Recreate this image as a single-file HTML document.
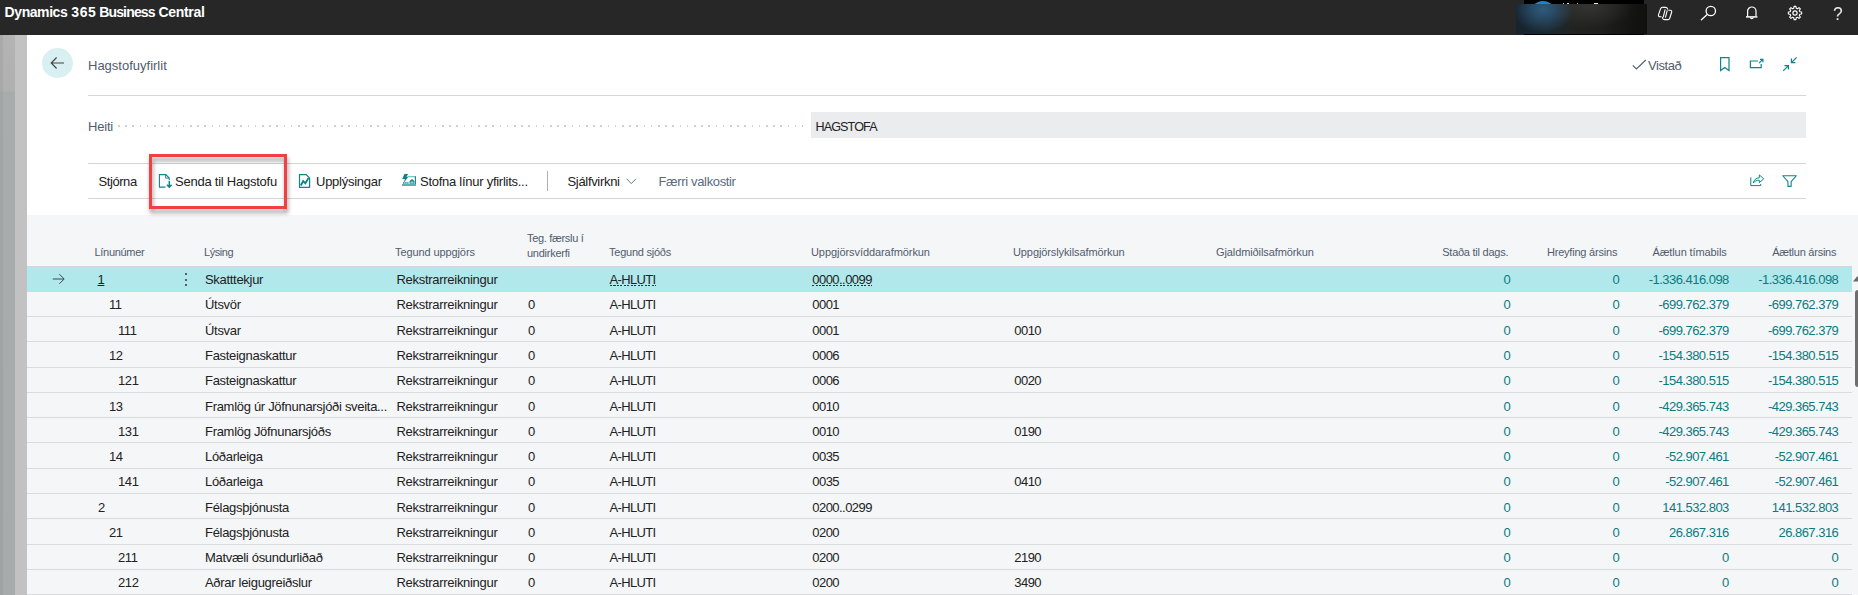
<!DOCTYPE html>
<html lang="is">
<head>
<meta charset="utf-8">
<title>Hagstofuyfirlit - Dynamics 365 Business Central</title>
<style>
*{box-sizing:border-box;margin:0;padding:0}
html,body{width:1858px;height:595px;overflow:hidden;background:#fff}
body{position:relative;font-family:"Liberation Sans",Arial,sans-serif;font-size:13px;color:#212121}
.abs{position:absolute;white-space:nowrap}
svg{overflow:visible}
#topbar{position:absolute;left:0;top:0;width:1858px;height:35px;background:#272727}
#brand{position:absolute;left:4px;top:4px;width:210px;height:17px;font-size:14px;font-weight:700;color:#fff;line-height:17px;white-space:nowrap}
#brand span{position:absolute;top:0}
#redact1{position:absolute;left:1524px;top:0;width:120px;height:35px;background:#000;overflow:hidden}
#avatar{position:absolute;left:5.5px;top:1px;width:26px;height:26px;border-radius:50%;background:#1b84cf}
.bit{position:absolute;top:3px;height:1.2px;background:#e8e8e8}
#redact2{position:absolute;left:1516px;top:4px;width:131px;height:30px;background:radial-gradient(ellipse 30px 24px at 27px 5px,#2e5a7d 0%,rgba(46,91,126,.7) 35%,rgba(30,50,66,0) 100%),radial-gradient(ellipse 46px 22px at 73px 2px,rgba(54,54,51,.9) 0%,rgba(40,40,38,0) 100%),linear-gradient(90deg,#17232d 0%,#1b2830 25%,#222321 45%,#1f1f1d 65%,#141413 88%,#101010 100%)}
.strip{position:absolute;top:35px;height:560px}
#page{position:absolute;left:27px;top:35px;width:1831px;height:180px;background:#fff}
#grid{position:absolute;left:27px;top:215px;width:1831px;height:380px;background:#f5f6f8}
.hline{position:absolute;left:88px;width:1718px;height:1px;background:#d3d7dd}
#back{position:absolute;left:42px;top:48px;width:31px;height:30px;border-radius:50%;background:#d9f0f2}
.cap{color:#505c6d}
.tb{position:absolute;top:173.5px;font-size:13px;line-height:16px;white-space:nowrap;color:#212121}
.hd{position:absolute;font-size:11px;line-height:15px;color:#505c6d;white-space:nowrap;letter-spacing:-0.1px}
.row{position:absolute;left:27px;width:1825px;border-bottom:1px solid #d9dbdf}
.row.sel{background:#b1e8eb;border-top:1px solid #d3d6da;border-bottom-color:#d3d6da}
.c{position:absolute;font-size:13px;line-height:16px;white-space:nowrap;color:#212121}
.c.r{text-align:right}
.c.t{color:#0a7b80}
.c.u{text-decoration:underline;text-underline-offset:0.5px;text-decoration-thickness:1px}
.c.du{background:repeating-linear-gradient(90deg,#333 0,#333 2px,transparent 2px,transparent 3.5px) 0 13px/100% 1px no-repeat}
.rowarrow{position:absolute;left:25px;top:6px}
.dots3{position:absolute;left:157.5px;top:6px;width:3px}
.dots3 i{display:block;width:2px;height:2px;background:#333;margin-bottom:3.7px;border-radius:1px}
</style>
</head>
<body>
<div id="topbar">
  <div id="brand"><span style="left:0.6px;letter-spacing:-0.43px">Dynamics</span> <span style="left:67.3px;letter-spacing:0.56px">365</span> <span style="left:95.2px;letter-spacing:-0.84px">Business</span> <span style="left:154.6px;letter-spacing:-0.34px">Central</span></div>
  <div id="redact1"><div id="avatar"></div><div class="bit" style="left:38.5px;width:1.6px;background:#e9c27a"></div><div class="bit" style="left:42.5px;width:2px;background:#cfe0ea"></div><div class="bit" style="left:52.5px;width:1.6px;background:#d9a0a0"></div><div class="bit" style="left:70px;width:4px"></div></div>
  <div id="redact2"></div>
  <!-- copilot -->
  <svg class="abs" style="left:1657px;top:6px" width="17" height="15" viewBox="0 0 17 15" fill="none" stroke="#fff" stroke-width="1.15" stroke-linejoin="round"><g transform="translate(0.2 0.3) scale(0.95)">
    <path d="M5.4 1.1h3.6c.9 0 1.5.5 1.8 1.3l.3 1"/>
    <path d="M5.4 1.1c-.9 0-1.5.6-1.8 1.4L1.4 8.8c-.4 1.2.3 2.2 1.5 2.2h1.7"/>
    <path d="M11.4 14H7.6c-.9 0-1.5-.5-1.8-1.3l-.4-1.4"/>
    <path d="M11.4 14c.9 0 1.5-.6 1.8-1.4l2-6.3c.4-1.2-.3-2.2-1.5-2.2h-2"/>
    <path d="M8.4 3.2L6.3 11.6"/><path d="M10.6 4.2L8.6 12"/></g>
  </svg>
  <!-- search -->
  <svg class="abs" style="left:1700px;top:4px" width="18" height="17" viewBox="0 0 18 17" fill="none" stroke="#fff" stroke-width="1.3"><g transform="translate(0.2 0.5)">
    <circle cx="10.6" cy="6.5" r="4.7"/><path d="M7 10L1.2 15.2" stroke-linecap="round"/>
  </g></svg>
  <!-- bell -->
  <svg class="abs" style="left:1744px;top:5px" width="16" height="16" viewBox="0 0 16 16" fill="none" stroke="#fff" stroke-width="1.2">
    <path d="M3.6 11.6V6.2a4.2 4.2 0 0 1 8.4 0v5.4"/><path d="M2 11.9h11.4" stroke-width="1.5"/><path d="M6.2 12.4a1.7 1.7 0 0 0 3.2 0" />
  </svg>
  <!-- gear -->
  <svg class="abs" style="left:1787px;top:5px" width="16" height="16" viewBox="0 0 16 16" fill="none" stroke="#fff" stroke-linejoin="round">
    <path stroke-width="1.1" d="M6.79 3.15 L7.06 1.37 L8.94 1.37 L9.21 3.15 L10.58 3.72 L12.02 2.64 L13.36 3.98 L12.28 5.42 L12.85 6.79 L14.63 7.06 L14.63 8.94 L12.85 9.21 L12.28 10.58 L13.36 12.02 L12.02 13.36 L10.58 12.28 L9.21 12.85 L8.94 14.63 L7.06 14.63 L6.79 12.85 L5.42 12.28 L3.98 13.36 L2.64 12.02 L3.72 10.58 L3.15 9.21 L1.37 8.94 L1.37 7.06 L3.15 6.79 L3.72 5.42 L2.64 3.98 L3.98 2.64 L5.42 3.72Z"/>
    <circle cx="8" cy="8" r="2.1" stroke-width="1.2"/>
  </svg>
  <div class="abs" style="left:1832.5px;top:1.5px;color:#ececec;font-size:19px;line-height:24px;transform:scaleX(.92);transform-origin:left">?</div>
</div>

<div class="strip" style="left:0;width:3px;background:linear-gradient(180deg,#aaa 0,#a8a8a8 55px,#a2a5a6 57px,#a0a3a4 100%)"></div>
<div class="strip" style="left:3px;width:12px;background:linear-gradient(180deg,#b4b4b4 0,#b0b0b0 55px,#a9acad 57px,#a8abac 100%)"></div>
<div class="strip" style="left:15px;width:12px;background:#c2c2c2"></div>

<div id="page"></div>
<div id="grid"></div>

<!-- page header -->
<div id="back"></div>
<svg class="abs" style="left:50px;top:56px" width="15" height="13" viewBox="0 0 15 13" fill="none" stroke="#404040" stroke-width="1.1"><g transform="translate(0.0 0.5)"><path d="M14 6.5H1.2M6.6 1L1.2 6.5L6.6 12"/></g></svg>
<div class="abs cap" style="left:88px;top:58px;font-size:13px;line-height:16px;letter-spacing:0">Hagstofuyfirlit</div>

<svg class="abs" style="left:1632px;top:59px" width="15" height="12" viewBox="0 0 15 12" fill="none" stroke="#505c6d" stroke-width="1.1"><path d="M0.8 6.4L4.4 10L13.8 1"/></svg>
<div class="abs cap" style="left:1648px;top:58px;font-size:13px;line-height:16px;letter-spacing:-0.45px">Vistað</div>
<!-- bookmark -->
<svg class="abs" style="left:1719px;top:56px" width="12" height="16" viewBox="0 0 12 16" fill="none" stroke="#0f8489" stroke-width="1.2"><path d="M1.6 14.6V1.6h8.4v13L5.8 11.4Z"/></svg>
<!-- popout -->
<svg class="abs" style="left:1749px;top:57px" width="16" height="13" viewBox="0 0 16 13" fill="none" stroke="#0f8489" stroke-width="1.2"><path d="M9 4H1.4v6.6h10.8V7"/><path d="M10 6.2L13.6 2.6M11 2.3h2.9v2.9"/></svg>
<!-- collapse -->
<svg class="abs" style="left:1782px;top:56px" width="16" height="16" viewBox="0 0 16 16" fill="none" stroke="#0f8489" stroke-width="1.2"><path d="M14.6 1.4L9.4 6.6M9.4 2.6v4h4"/><path d="M1.2 14.8L6.4 9.6M2.4 9.6h4v4"/></svg>

<div class="hline" style="top:95px"></div>

<div class="abs cap" style="left:88px;top:119px;font-size:13px;line-height:16px;letter-spacing:-0.2px">Heiti</div>
<div class="abs" style="left:117.6px;top:125px;width:685px;height:2px;background:repeating-linear-gradient(90deg,#cdd1d6 0,#cdd1d6 1.6px,transparent 1.6px,transparent 7.2px)"></div>
<div class="abs" style="left:811px;top:112px;width:995px;height:26px;background:#ebecee"></div>
<div class="abs" style="left:815.5px;top:119px;font-size:12.6px;line-height:16px;letter-spacing:-0.9px;color:#212121">HAGSTOFA</div>

<!-- action bar -->
<div class="hline" style="top:163px"></div>
<div class="hline" style="top:198px"></div>
<div class="tb" style="left:98.5px;letter-spacing:-0.43px">Stjórna</div>
<div class="tb" style="left:175px;letter-spacing:-0.24px">Senda til Hagstofu</div>
<div class="tb" style="left:316px;letter-spacing:-0.26px">Upplýsingar</div>
<div class="tb" style="left:420px;letter-spacing:-0.265px">Stofna línur yfirlits...</div>
<div class="abs" style="left:547px;top:171px;width:1px;height:20px;background:#aab1bb"></div>
<div class="tb" style="left:567.5px;letter-spacing:-0.32px">Sjálfvirkni</div>
<svg class="abs" style="left:626px;top:178px" width="11" height="7" viewBox="0 0 11 7" fill="none" stroke="#6b7380" stroke-width="1"><path d="M0.6 0.8L5.3 5.6L10 0.8"/></svg>
<div class="tb cap" style="left:658.5px;letter-spacing:-0.35px;color:#5b6a7f">Færri valkostir</div>

<!-- icon: send -->
<svg class="abs" style="left:158px;top:173px" width="15" height="15" viewBox="0 0 15 15" fill="none" stroke="#0f8489" stroke-width="1.1"><g transform="translate(0.0 0.5)"><path d="M7.4 13.6H1.4V1.1h6.4l3.4 3.4v2.3"/><path d="M7.6 1.1v3.5h3.4" stroke-width=".9"/><path d="M11.3 7.4v6M8.9 11.2l2.4 2.4l2.4-2.4" stroke-width="1.5"/></g></svg>
<!-- icon: info chart -->
<svg class="abs" style="left:298px;top:173px" width="13" height="15" viewBox="0 0 13 15" fill="none" stroke="#0f8489" stroke-width="1.2"><g transform="translate(0.0 0.5)"><path d="M1.5 13.8V1.2h6.7l3.4 3.4v9.2Z"/><path d="M2.8 12l2.4-4.4l2.2 2.2L10.4 4.6" stroke-width="1.9"/></g></svg>
<!-- icon: create lines -->
<svg class="abs" style="left:400px;top:173px" width="16" height="14" viewBox="0 0 16 14" fill="none"><g transform="translate(1.4 0.5)"><path d="M3 .6h3.8L5 3.2h2L2.2 9.6l1.2-4H.8Z" fill="#0b8389"/><path d="M6.4 3.2h7.9" stroke="#6cb7bb" stroke-width="1.1"/><path d="M14 2.8v8.4" stroke="#0f8489" stroke-width="1.1"/><path d="M.6 11.5h14" stroke="#55abb0" stroke-width="1.9"/><path d="M8.2 7.6l2.4-2.1l2.4 2.1v2.7H8.2Z" fill="#0b8389"/><path d="M10.6 7.3v3M8.8 8.8h3.6" stroke="#eaf6f7" stroke-width=".6"/><path d="M1.6 8.6h5.6v1.7H1.6Z" fill="#2d969b"/><path d="M3.4 8.6v1.7M5.4 8.6v1.7" stroke="#fff" stroke-width=".6"/></g></svg>
<!-- share -->
<svg class="abs" style="left:1749px;top:173px" width="16" height="13" viewBox="0 0 16 13" fill="none" stroke="#0f8489" stroke-width="1"><g transform="translate(0.7 0.6)"><path d="M1.1 3.8V12H11v-1.6"/><path d="M3.7 9.4C4.1 6.2 6.4 4.4 9.6 4.2V1.3L14 5.2L9.6 9.1V6.6C7 6.6 5 7.4 3.7 9.4Z" stroke-linejoin="round"/></g></svg>
<!-- filter -->
<svg class="abs" style="left:1781px;top:174px" width="16" height="13" viewBox="0 0 16 13" fill="none" stroke="#0f8489" stroke-width="1.1" stroke-linejoin="round"><g transform="translate(0.55 0.55)"><path d="M1.2 1.2h13.6L9.6 7v4.8H6.4V7Z"/></g></svg>

<!-- red highlight -->
<div class="abs" style="left:149px;top:154px;width:138px;height:55px;border:3px solid #f23f43;filter:drop-shadow(1.5px 4.5px 2px rgba(0,0,0,.4))"></div>

<!-- column headers -->
<div class="hd" style="left:94.5px;top:244.5px;letter-spacing:-0.3px">Línunúmer</div>
<div class="hd" style="left:204px;top:244.5px;letter-spacing:-0.45px">Lýsing</div>
<div class="hd" style="left:395px;top:244.5px">Tegund uppgjörs</div>
<div class="hd" style="left:527px;top:230.5px;letter-spacing:-0.31px">Teg. færslu í</div>
<div class="hd" style="left:527px;top:245.5px;letter-spacing:-0.25px">undirkerfi</div>
<div class="hd" style="left:609px;top:244.5px;letter-spacing:-0.24px">Tegund sjóðs</div>
<div class="hd" style="left:811px;top:244.5px;letter-spacing:-0.07px">Uppgjörsvíddarafmörkun</div>
<div class="hd" style="left:1013px;top:244.5px">Uppgjörslykilsafmörkun</div>
<div class="hd" style="left:1216px;top:244.5px">Gjaldmiðilsafmörkun</div>
<div class="hd" style="right:349.8px;top:244.5px;letter-spacing:-0.25px">Staða til dags.</div>
<div class="hd" style="right:240.8px;top:244.5px;letter-spacing:-0.21px">Hreyfing ársins</div>
<div class="hd" style="right:131.3px;top:244.5px;letter-spacing:-0.1px">Áætlun tímabils</div>
<div class="hd" style="right:21.8px;top:244.5px;letter-spacing:-0.25px">Áætlun ársins</div>

<div class="row sel" style="top:266px;height:26px"><svg class="rowarrow" width="14" height="12" viewBox="0 0 14 12"><path d="M0.8 6H12M7.4 1.2L12.2 6L7.4 10.8" fill="none" stroke="#3d4856" stroke-width="1"/></svg><span class="dots3"><i></i><i></i><i></i></span><span class="c u" style="left:70.5px;top:5px;letter-spacing:-0.4px">1</span><span class="c" style="left:178px;top:5px;letter-spacing:-0.3px">Skatttekjur</span><span class="c" style="left:369.5px;top:5px;letter-spacing:-0.29px">Rekstrarreikningur</span><span class="c du" style="left:582.5px;top:5px;letter-spacing:-0.65px">A-HLUTI</span><span class="c du" style="left:785.3px;top:5px;letter-spacing:-0.55px">0000..0099</span><span class="c r t" style="right:341.9px;top:5px;letter-spacing:-0.52px">0</span><span class="c r t" style="right:232.9px;top:5px;letter-spacing:-0.52px">0</span><span class="c r t" style="right:123.2px;top:5px;letter-spacing:-0.52px">-1.336.416.098</span><span class="c r t" style="right:13.7px;top:5px;letter-spacing:-0.52px">-1.336.416.098</span></div>
<div class="row" style="top:292px;height:25px"><span class="c" style="left:82px;top:5px;letter-spacing:-0.4px">11</span><span class="c" style="left:178px;top:5px;letter-spacing:-0.3px">Útsvör</span><span class="c" style="left:369.5px;top:5px;letter-spacing:-0.29px">Rekstrarreikningur</span><span class="c" style="left:501px;top:5px;letter-spacing:-0.5px">0</span><span class="c" style="left:582.5px;top:5px;letter-spacing:-0.65px">A-HLUTI</span><span class="c" style="left:785.3px;top:5px;letter-spacing:-0.55px">0001</span><span class="c r t" style="right:341.9px;top:5px;letter-spacing:-0.52px">0</span><span class="c r t" style="right:232.9px;top:5px;letter-spacing:-0.52px">0</span><span class="c r t" style="right:123.2px;top:5px;letter-spacing:-0.52px">-699.762.379</span><span class="c r t" style="right:13.7px;top:5px;letter-spacing:-0.52px">-699.762.379</span></div>
<div class="row" style="top:317px;height:25px"><span class="c" style="left:91px;top:6px;letter-spacing:-0.4px">111</span><span class="c" style="left:178px;top:6px;letter-spacing:-0.3px">Útsvar</span><span class="c" style="left:369.5px;top:6px;letter-spacing:-0.29px">Rekstrarreikningur</span><span class="c" style="left:501px;top:6px;letter-spacing:-0.5px">0</span><span class="c" style="left:582.5px;top:6px;letter-spacing:-0.65px">A-HLUTI</span><span class="c" style="left:785.3px;top:6px;letter-spacing:-0.55px">0001</span><span class="c" style="left:987.3px;top:6px;letter-spacing:-0.55px">0010</span><span class="c r t" style="right:341.9px;top:6px;letter-spacing:-0.52px">0</span><span class="c r t" style="right:232.9px;top:6px;letter-spacing:-0.52px">0</span><span class="c r t" style="right:123.2px;top:6px;letter-spacing:-0.52px">-699.762.379</span><span class="c r t" style="right:13.7px;top:6px;letter-spacing:-0.52px">-699.762.379</span></div>
<div class="row" style="top:342px;height:26px"><span class="c" style="left:82px;top:6px;letter-spacing:-0.4px">12</span><span class="c" style="left:178px;top:6px;letter-spacing:-0.3px">Fasteignaskattur</span><span class="c" style="left:369.5px;top:6px;letter-spacing:-0.29px">Rekstrarreikningur</span><span class="c" style="left:501px;top:6px;letter-spacing:-0.5px">0</span><span class="c" style="left:582.5px;top:6px;letter-spacing:-0.65px">A-HLUTI</span><span class="c" style="left:785.3px;top:6px;letter-spacing:-0.55px">0006</span><span class="c r t" style="right:341.9px;top:6px;letter-spacing:-0.52px">0</span><span class="c r t" style="right:232.9px;top:6px;letter-spacing:-0.52px">0</span><span class="c r t" style="right:123.2px;top:6px;letter-spacing:-0.52px">-154.380.515</span><span class="c r t" style="right:13.7px;top:6px;letter-spacing:-0.52px">-154.380.515</span></div>
<div class="row" style="top:368px;height:25px"><span class="c" style="left:91px;top:5px;letter-spacing:-0.4px">121</span><span class="c" style="left:178px;top:5px;letter-spacing:-0.3px">Fasteignaskattur</span><span class="c" style="left:369.5px;top:5px;letter-spacing:-0.29px">Rekstrarreikningur</span><span class="c" style="left:501px;top:5px;letter-spacing:-0.5px">0</span><span class="c" style="left:582.5px;top:5px;letter-spacing:-0.65px">A-HLUTI</span><span class="c" style="left:785.3px;top:5px;letter-spacing:-0.55px">0006</span><span class="c" style="left:987.3px;top:5px;letter-spacing:-0.55px">0020</span><span class="c r t" style="right:341.9px;top:5px;letter-spacing:-0.52px">0</span><span class="c r t" style="right:232.9px;top:5px;letter-spacing:-0.52px">0</span><span class="c r t" style="right:123.2px;top:5px;letter-spacing:-0.52px">-154.380.515</span><span class="c r t" style="right:13.7px;top:5px;letter-spacing:-0.52px">-154.380.515</span></div>
<div class="row" style="top:393px;height:25px"><span class="c" style="left:82px;top:6px;letter-spacing:-0.4px">13</span><span class="c" style="left:178px;top:6px;letter-spacing:-0.3px">Framlög úr Jöfnunarsjóði sveita...</span><span class="c" style="left:369.5px;top:6px;letter-spacing:-0.29px">Rekstrarreikningur</span><span class="c" style="left:501px;top:6px;letter-spacing:-0.5px">0</span><span class="c" style="left:582.5px;top:6px;letter-spacing:-0.65px">A-HLUTI</span><span class="c" style="left:785.3px;top:6px;letter-spacing:-0.55px">0010</span><span class="c r t" style="right:341.9px;top:6px;letter-spacing:-0.52px">0</span><span class="c r t" style="right:232.9px;top:6px;letter-spacing:-0.52px">0</span><span class="c r t" style="right:123.2px;top:6px;letter-spacing:-0.52px">-429.365.743</span><span class="c r t" style="right:13.7px;top:6px;letter-spacing:-0.52px">-429.365.743</span></div>
<div class="row" style="top:418px;height:25px"><span class="c" style="left:91px;top:6px;letter-spacing:-0.4px">131</span><span class="c" style="left:178px;top:6px;letter-spacing:-0.3px">Framlög Jöfnunarsjóðs</span><span class="c" style="left:369.5px;top:6px;letter-spacing:-0.29px">Rekstrarreikningur</span><span class="c" style="left:501px;top:6px;letter-spacing:-0.5px">0</span><span class="c" style="left:582.5px;top:6px;letter-spacing:-0.65px">A-HLUTI</span><span class="c" style="left:785.3px;top:6px;letter-spacing:-0.55px">0010</span><span class="c" style="left:987.3px;top:6px;letter-spacing:-0.55px">0190</span><span class="c r t" style="right:341.9px;top:6px;letter-spacing:-0.52px">0</span><span class="c r t" style="right:232.9px;top:6px;letter-spacing:-0.52px">0</span><span class="c r t" style="right:123.2px;top:6px;letter-spacing:-0.52px">-429.365.743</span><span class="c r t" style="right:13.7px;top:6px;letter-spacing:-0.52px">-429.365.743</span></div>
<div class="row" style="top:443px;height:26px"><span class="c" style="left:82px;top:6px;letter-spacing:-0.4px">14</span><span class="c" style="left:178px;top:6px;letter-spacing:-0.3px">Lóðarleiga</span><span class="c" style="left:369.5px;top:6px;letter-spacing:-0.29px">Rekstrarreikningur</span><span class="c" style="left:501px;top:6px;letter-spacing:-0.5px">0</span><span class="c" style="left:582.5px;top:6px;letter-spacing:-0.65px">A-HLUTI</span><span class="c" style="left:785.3px;top:6px;letter-spacing:-0.55px">0035</span><span class="c r t" style="right:341.9px;top:6px;letter-spacing:-0.52px">0</span><span class="c r t" style="right:232.9px;top:6px;letter-spacing:-0.52px">0</span><span class="c r t" style="right:123.2px;top:6px;letter-spacing:-0.52px">-52.907.461</span><span class="c r t" style="right:13.7px;top:6px;letter-spacing:-0.52px">-52.907.461</span></div>
<div class="row" style="top:469px;height:25px"><span class="c" style="left:91px;top:5px;letter-spacing:-0.4px">141</span><span class="c" style="left:178px;top:5px;letter-spacing:-0.3px">Lóðarleiga</span><span class="c" style="left:369.5px;top:5px;letter-spacing:-0.29px">Rekstrarreikningur</span><span class="c" style="left:501px;top:5px;letter-spacing:-0.5px">0</span><span class="c" style="left:582.5px;top:5px;letter-spacing:-0.65px">A-HLUTI</span><span class="c" style="left:785.3px;top:5px;letter-spacing:-0.55px">0035</span><span class="c" style="left:987.3px;top:5px;letter-spacing:-0.55px">0410</span><span class="c r t" style="right:341.9px;top:5px;letter-spacing:-0.52px">0</span><span class="c r t" style="right:232.9px;top:5px;letter-spacing:-0.52px">0</span><span class="c r t" style="right:123.2px;top:5px;letter-spacing:-0.52px">-52.907.461</span><span class="c r t" style="right:13.7px;top:5px;letter-spacing:-0.52px">-52.907.461</span></div>
<div class="row" style="top:494px;height:25px"><span class="c" style="left:71px;top:6px;letter-spacing:-0.4px">2</span><span class="c" style="left:178px;top:6px;letter-spacing:-0.3px">Félagsþjónusta</span><span class="c" style="left:369.5px;top:6px;letter-spacing:-0.29px">Rekstrarreikningur</span><span class="c" style="left:501px;top:6px;letter-spacing:-0.5px">0</span><span class="c" style="left:582.5px;top:6px;letter-spacing:-0.65px">A-HLUTI</span><span class="c" style="left:785.3px;top:6px;letter-spacing:-0.55px">0200..0299</span><span class="c r t" style="right:341.9px;top:6px;letter-spacing:-0.52px">0</span><span class="c r t" style="right:232.9px;top:6px;letter-spacing:-0.52px">0</span><span class="c r t" style="right:123.2px;top:6px;letter-spacing:-0.52px">141.532.803</span><span class="c r t" style="right:13.7px;top:6px;letter-spacing:-0.52px">141.532.803</span></div>
<div class="row" style="top:519px;height:26px"><span class="c" style="left:82px;top:6px;letter-spacing:-0.4px">21</span><span class="c" style="left:178px;top:6px;letter-spacing:-0.3px">Félagsþjónusta</span><span class="c" style="left:369.5px;top:6px;letter-spacing:-0.29px">Rekstrarreikningur</span><span class="c" style="left:501px;top:6px;letter-spacing:-0.5px">0</span><span class="c" style="left:582.5px;top:6px;letter-spacing:-0.65px">A-HLUTI</span><span class="c" style="left:785.3px;top:6px;letter-spacing:-0.55px">0200</span><span class="c r t" style="right:341.9px;top:6px;letter-spacing:-0.52px">0</span><span class="c r t" style="right:232.9px;top:6px;letter-spacing:-0.52px">0</span><span class="c r t" style="right:123.2px;top:6px;letter-spacing:-0.52px">26.867.316</span><span class="c r t" style="right:13.7px;top:6px;letter-spacing:-0.52px">26.867.316</span></div>
<div class="row" style="top:545px;height:25px"><span class="c" style="left:91px;top:5px;letter-spacing:-0.4px">211</span><span class="c" style="left:178px;top:5px;letter-spacing:-0.3px">Matvæli ósundurliðað</span><span class="c" style="left:369.5px;top:5px;letter-spacing:-0.29px">Rekstrarreikningur</span><span class="c" style="left:501px;top:5px;letter-spacing:-0.5px">0</span><span class="c" style="left:582.5px;top:5px;letter-spacing:-0.65px">A-HLUTI</span><span class="c" style="left:785.3px;top:5px;letter-spacing:-0.55px">0200</span><span class="c" style="left:987.3px;top:5px;letter-spacing:-0.55px">2190</span><span class="c r t" style="right:341.9px;top:5px;letter-spacing:-0.52px">0</span><span class="c r t" style="right:232.9px;top:5px;letter-spacing:-0.52px">0</span><span class="c r t" style="right:123.2px;top:5px;letter-spacing:-0.52px">0</span><span class="c r t" style="right:13.7px;top:5px;letter-spacing:-0.52px">0</span></div>
<div class="row" style="top:570px;height:25px"><span class="c" style="left:91px;top:5px;letter-spacing:-0.4px">212</span><span class="c" style="left:178px;top:5px;letter-spacing:-0.3px">Aðrar leigugreiðslur</span><span class="c" style="left:369.5px;top:5px;letter-spacing:-0.29px">Rekstrarreikningur</span><span class="c" style="left:501px;top:5px;letter-spacing:-0.5px">0</span><span class="c" style="left:582.5px;top:5px;letter-spacing:-0.65px">A-HLUTI</span><span class="c" style="left:785.3px;top:5px;letter-spacing:-0.55px">0200</span><span class="c" style="left:987.3px;top:5px;letter-spacing:-0.55px">3490</span><span class="c r t" style="right:341.9px;top:5px;letter-spacing:-0.52px">0</span><span class="c r t" style="right:232.9px;top:5px;letter-spacing:-0.52px">0</span><span class="c r t" style="right:123.2px;top:5px;letter-spacing:-0.52px">0</span><span class="c r t" style="right:13.7px;top:5px;letter-spacing:-0.52px">0</span></div>

<!-- scrollbar -->
<svg class="abs" style="left:1853px;top:276px" width="5" height="6" viewBox="0 0 5 6"><path d="M0 5.5L4 0.5h1v5Z" fill="#6a6a6a"/></svg>
<div class="abs" style="left:1855px;top:289.5px;width:6px;height:97.5px;border-radius:3px;background:#6e6e6e"></div>
</body>
</html>
